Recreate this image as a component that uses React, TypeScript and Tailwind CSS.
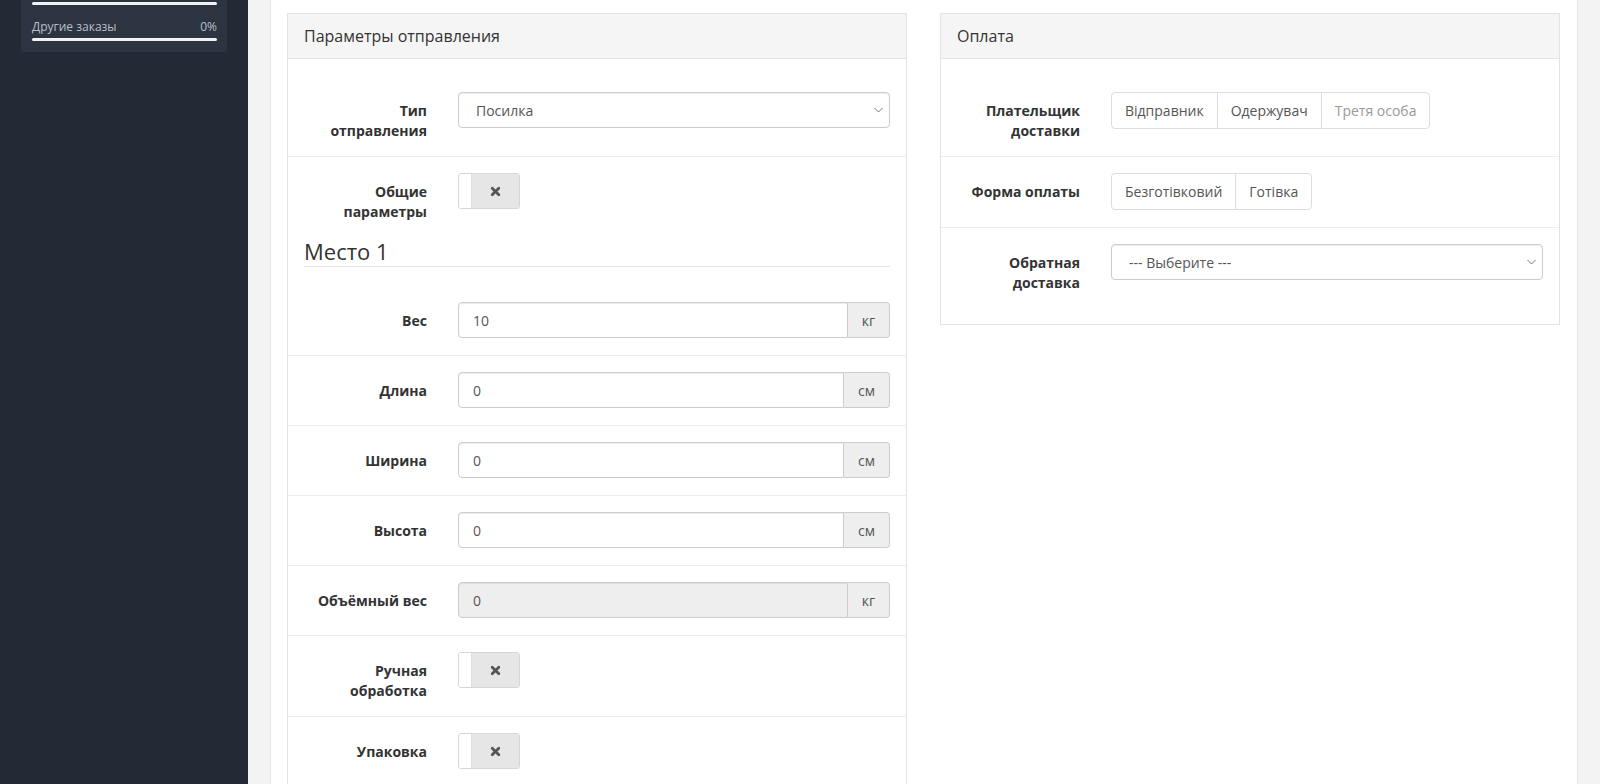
import React from 'react';

const font = "font-['Open_Sans',sans-serif]";

const Chevron = () => (
  <svg width="9" height="5" viewBox="0 0 9 5" className="absolute right-[6px] top-1/2 -translate-y-1/2">
    <path d="M0.5 0.5l4 4 4-4" fill="none" stroke="#777" strokeWidth="1" />
  </svg>
);

const Select = ({ value }: { value: string }) => (
  <div className="relative h-9 rounded border border-[#ccc] bg-white shadow-[inset_0_1px_1px_rgba(0,0,0,0.075)] flex items-center pl-[17px] text-[14px] text-[#555]">
    {value}
    <Chevron />
  </div>
);

const Input = ({ value, unit, disabled }: { value: string; unit: string; disabled?: boolean }) => (
  <div className="flex h-9 text-[14px] text-[#555]">
    <div
      className={`flex-1 flex items-center px-[14px] border border-[#ccc] rounded-l shadow-[inset_0_1px_1px_rgba(0,0,0,0.075)] ${
        disabled ? 'bg-[#eee]' : 'bg-white'
      }`}
    >
      {value}
    </div>
    <div className="flex items-center px-[14px] bg-[#eee] border border-l-0 border-[#ccc] rounded-r">{unit}</div>
  </div>
);

// switch in the "off" state: white knob on the left, grey body with a cross
const Toggle = () => (
  <div className="flex h-9 w-[62px] rounded-[3px] border border-[#d6d6d6] overflow-hidden">
    <div className="w-[13px] bg-white border-r border-[#e0e0e0]" />
    <div className="flex-1 bg-[#e6e6e6] flex items-center justify-center">
      <svg width="11" height="11" viewBox="0 0 11 11">
        <path d="M2.2 2.2l6.6 6.6M8.8 2.2l-6.6 6.6" stroke="#555" strokeWidth="2.8" strokeLinecap="round" />
      </svg>
    </div>
  </div>
);

const ButtonGroup = ({ items, muted = [] }: { items: string[]; muted?: string[] }) => (
  <div className="flex">
    {items.map((item, i) => (
      <div
        key={item}
        className={`h-[37px] flex items-center px-[13px] text-[14px] border border-[#ddd] bg-white ${
          i > 0 ? '-ml-px' : ''
        } ${i === 0 ? 'rounded-l' : ''} ${i === items.length - 1 ? 'rounded-r' : ''} ${
          muted.includes(item) ? 'text-[#999]' : 'text-[#555]'
        }`}
      >
        {item}
      </div>
    ))}
  </div>
);

interface RowProps {
  label: React.ReactNode;
  divider?: boolean;
  children: React.ReactNode;
}

const Row = ({ label, divider = true, children }: RowProps) => (
  <div
    className={`grid grid-cols-[123px_1fr] gap-x-[31px] px-4 pb-[17px] ${
      divider ? 'border-t border-[#eee] pt-4' : 'pt-[17px]'
    }`}
  >
    <div className="text-right font-bold text-[14px] leading-5 pt-[9px] -mb-[2px] text-[#333]">{label}</div>
    <div className="flex items-start">
      <div className="flex-1">{children}</div>
    </div>
  </div>
);

const Panel = ({ title, children }: { title: string; children: React.ReactNode }) => (
  <div className="border border-[#e3e3e3] bg-white self-start w-full">
    <div className="h-[45px] bg-[#f5f5f5] border-b border-[#e3e3e3] flex items-center px-4 text-[16px] text-[#333]">
      {title}
    </div>
    {children}
  </div>
);

const Sidebar = () => (
  <aside className="w-[248px] shrink-0 bg-[#232a35] min-h-screen">
    <div className="ml-[21px] w-[206px] bg-[#2c3441] rounded-b-[3px] pt-[2px] pb-[11px] pl-[11px] pr-[10px]">
      <div className="h-[3px] rounded-full bg-[#f2f2f2]" />
      <div className="mt-[14px] flex justify-between text-[12px] leading-4 text-[#b9bfc9]">
        <span>Другие заказы</span>
        <span>0%</span>
      </div>
      <div className="mt-[3px] h-[3px] rounded-full bg-[#f2f2f2]" />
    </div>
  </aside>
);

export default function App() {
  return (
    <div className={`flex min-h-screen ${font}`}>
      <Sidebar />
      <main className="flex-1 bg-[#f3f3f3] px-[22px]">
        <div className="bg-white border-x border-[#e6e6e6] min-h-screen pt-[13px] pl-4 pr-[17px] grid grid-cols-2 gap-x-[33px] items-start">
          <Panel title="Параметры отправления">
            <div className="pt-4">
              <Row label={<>Тип<br />отправления</>} divider={false}>
                <Select value="Посилка" />
              </Row>
              <Row label={<>Общие<br />параметры</>}>
                <Toggle />
              </Row>
              <h3 className="mx-4 mt-[2px] mb-[18px] pb-[3px] border-b border-[#e5e5e5] text-[22px] leading-6 text-[#333]">
                Место 1
              </h3>
              <Row label="Вес" divider={false}>
                <Input value="10" unit="кг" />
              </Row>
              <Row label="Длина">
                <Input value="0" unit="см" />
              </Row>
              <Row label="Ширина">
                <Input value="0" unit="см" />
              </Row>
              <Row label="Высота">
                <Input value="0" unit="см" />
              </Row>
              <Row label="Объёмный вес">
                <Input value="0" unit="кг" disabled />
              </Row>
              <Row label={<>Ручная<br />обработка</>}>
                <Toggle />
              </Row>
              <Row label="Упаковка">
                <Toggle />
              </Row>
            </div>
          </Panel>
          <Panel title="Оплата">
            <div className="py-4">
              <Row label={<>Плательщик<br />доставки</>} divider={false}>
                <ButtonGroup items={['Відправник', 'Одержувач', 'Третя особа']} muted={['Третя особа']} />
              </Row>
              <Row label="Форма оплаты">
                <ButtonGroup items={['Безготівковий', 'Готівка']} />
              </Row>
              <Row label={<>Обратная<br />доставка</>}>
                <Select value="--- Выберите ---" />
              </Row>
            </div>
          </Panel>
        </div>
      </main>
    </div>
  );
}
